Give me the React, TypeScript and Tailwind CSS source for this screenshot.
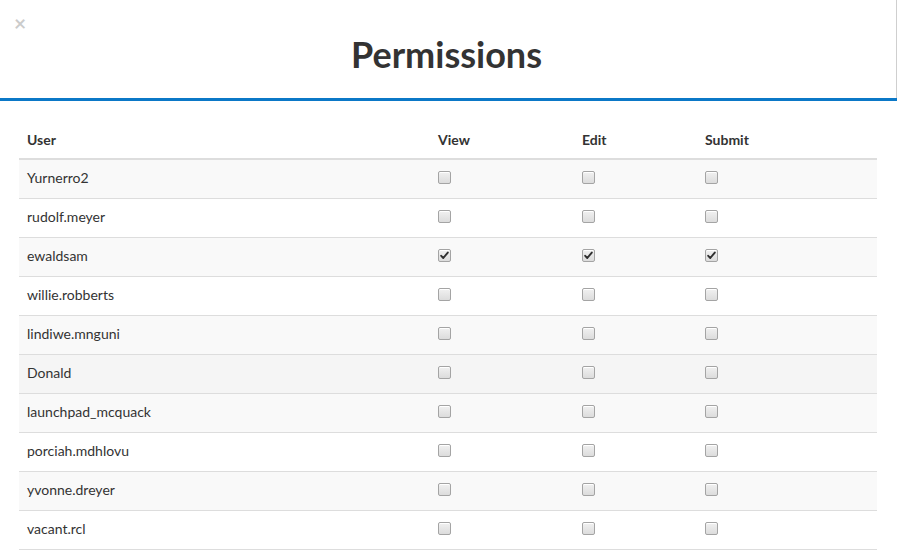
import React from "react";

const users: { name: string; checked: boolean; bg: string }[] = [
  { name: "Yurnerro2", checked: false, bg: "bg-[#f9f9f9]" },
  { name: "rudolf.meyer", checked: false, bg: "bg-white" },
  { name: "ewaldsam", checked: true, bg: "bg-[#f9f9f9]" },
  { name: "willie.robberts", checked: false, bg: "bg-white" },
  { name: "lindiwe.mnguni", checked: false, bg: "bg-[#f9f9f9]" },
  { name: "Donald", checked: false, bg: "bg-[#f5f5f5]" },
  { name: "launchpad_mcquack", checked: false, bg: "bg-[#f9f9f9]" },
  { name: "porciah.mdhlovu", checked: false, bg: "bg-white" },
  { name: "yvonne.dreyer", checked: false, bg: "bg-[#f9f9f9]" },
  { name: "vacant.rcl", checked: false, bg: "bg-white" },
];

function Box({ checked }: { checked: boolean }) {
  return (
    <span className="relative inline-block w-[13px] h-[13px] rounded-[2px] border border-[#a4a4a4] bg-gradient-to-b from-[#f1f1f1] to-[#dcdcdc] shadow-[inset_0_1px_0_#fff]">
      {checked && (
        <svg viewBox="0 0 13 13" className="absolute left-[-1px] top-[-1px] w-[13px] h-[13px]">
          <path d="M3.2 6.8 L5.3 9 L9.8 3.6" fill="none" stroke="#2f2f2f" strokeWidth="1.9" strokeLinecap="round" strokeLinejoin="round" />
        </svg>
      )}
    </span>
  );
}

const grid = "grid grid-cols-[411px_144px_123px_1fr]";

export default function App() {
  return (
    <div className="w-[897px] h-[551px] bg-white overflow-hidden text-[#333]" style={{ fontFamily: "Lato, 'Open Sans', sans-serif" }}>
      <div className="relative h-[98px] border-r border-[#cfcfcf] flex items-center justify-center">
        <span className="absolute left-[14px] top-[12px] text-[21px] font-bold leading-none text-[#000] opacity-20">×</span>
        <h1 className="text-[36px] font-bold leading-none mt-[10px] ml-[-3px] text-[#333]">Permissions</h1>
      </div>
      <div className="h-[3px] bg-[#0b78c7]" />
      <div className="mx-[19px] mt-[19px] w-[858px] text-[14px]">
        <div className={`${grid} h-[40px] border-b-2 border-[#dddddd] font-bold items-center`}>
          <div className="pl-[8px] pt-[1px]">User</div>
          <div className="pl-[8px] pt-[1px]">View</div>
          <div className="pl-[8px] pt-[1px]">Edit</div>
          <div className="pl-[8px] pt-[1px]">Submit</div>
        </div>
        {users.map((u) => (
          <div key={u.name} className={`${grid} h-[39px] pb-[3px] border-b border-[#dddddd] items-center ${u.bg}`}>
            <div className="pl-[8px]">{u.name}</div>
            <div className="pl-[8px] flex"><Box checked={u.checked} /></div>
            <div className="pl-[8px] flex"><Box checked={u.checked} /></div>
            <div className="pl-[8px] flex"><Box checked={u.checked} /></div>
          </div>
        ))}
      </div>
    </div>
  );
}
